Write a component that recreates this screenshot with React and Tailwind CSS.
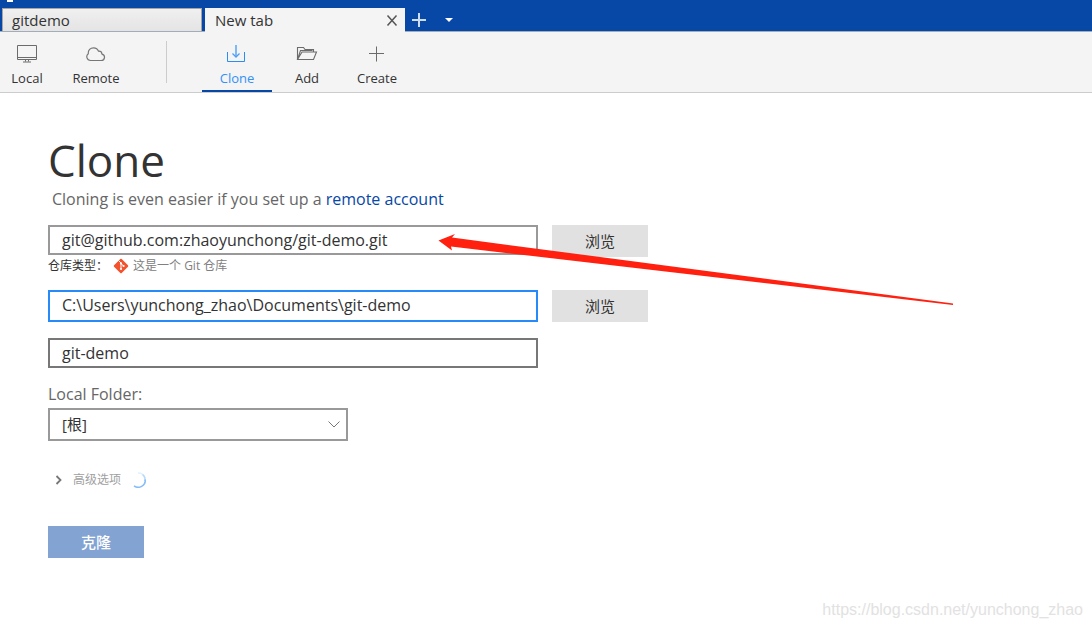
import { useState } from "react";

const CloneIcon = () => (
  <svg width="20" height="20" viewBox="0 0 20 20" fill="none" stroke="currentColor">
    <path d="M.5 8v9.500h17V8" stroke="#2a8cf5" />
    <path d="M9 1v12" stroke="#7db9f8" strokeWidth="2" />
    <path d="M5.500 9.500L9 13l3.500-3.500" stroke="#4a9ef6" strokeWidth="1.300" />
  </svg>
);

const LocalIcon = () => (
  <svg width="20" height="20" viewBox="0 0 20 20" fill="none" stroke="#6b6b6b">
    <path d="M.5 1.500h19v14H.5zM.5 13.500h19M8.500 15.500v2M11.500 15.500v2M6 18h8" />
  </svg>
);

const RemoteIcon = () => (
  <svg width="20" height="20" viewBox="0 0 20 20" fill="none" stroke="#777" strokeWidth="1.200">
    <path d="M4.500 16.500A3.800 3.800 0 0 1 2.300 9.700C1.900 6.100 4.400 3.800 7.500 3.800c2.600 0 4.300 1.300 5 3.400 2.100-.2 3.300 1 3.500 2.900 1.800.5 2.600 1.800 2.500 3.300-.1 1.800-1.500 3.100-3.300 3.100z" />
  </svg>
);

const AddIcon = () => (
  <svg width="22" height="20" viewBox="0 0 22 20" fill="none" stroke="#6b6b6b" strokeWidth="1.100">
    <path d="M1.500 15.500v-12h6l1.500 2h8.500v2.500M1.500 15.500l4.500-7.500h14.500l-3 7.500zM1.500 15.500L4.500 6.500h12" />
  </svg>
);

const CreateIcon = () => (
  <svg width="20" height="20" viewBox="0 0 20 20" fill="none" stroke="#6b6b6b">
    <path d="M9.500 2.500v15M2 9.500h15" />
  </svg>
);

const GitIcon = () => (
  <svg width="16" height="16" viewBox="0 0 16 16" fill="none">
    <rect x="2.600" y="2.600" width="10.800" height="10.800" rx="1" fill="#f4512c" transform="rotate(45 8 8)" />
    <path d="M5.500 2.500L8 5v6M8 5.500l2.500 2.500" stroke="#fff" />
    <circle cx="8" cy="5.400" r="1.100" fill="#fff" />
    <circle cx="8" cy="11" r="1.100" fill="#fff" />
    <circle cx="10.600" cy="8" r="1.100" fill="#fff" />
  </svg>
);

const Spinner = () => (
  <svg width="16" height="16" viewBox="0 0 16 16" fill="none" strokeWidth="1.600">
    <path d="M7 1c3 0 6 2 7 5" stroke="#e3f0fd" />
    <path d="M11.500 2.500A7 7 0 0 1 14 9" stroke="#b9d9fb" />
    <path d="M14.200 7.500A7 7 0 0 1 3 13.800" stroke="#86bdf9" />
  </svg>
);

const locations = [
  { id: "local", label: "Local", icon: LocalIcon, width: "w-[54px]" },
  { id: "remote", label: "Remote", icon: RemoteIcon, width: "w-[84px]" },
];

const actions = [
  { id: "clone", label: "Clone", icon: CloneIcon, width: "w-[70px]" },
  { id: "add", label: "Add", icon: AddIcon, width: "w-[70px]" },
  { id: "create", label: "Create", icon: CreateIcon, width: "w-[70px]" },
];

function ToolButton({ item, active, onSelect }) {
  const Icon = item.icon;
  return (
    <button
      onClick={() => onSelect(item.id)}
      className={`
        flex flex-col items-center gap-1 pt-3 border-b-2 text-[13px] leading-5
        ${item.width}
        ${active ? "border-[#0747a6] text-[#3390f7]" : "border-transparent text-[#333]"}
      `}
    >
      <Icon />
      {item.label}
    </button>
  );
}

function TabBar() {
  return (
    <div className="relative flex items-end h-8 pl-0.5 bg-[#0747a6] border-b border-[#a3acb9] text-[15px] text-[#333]">
      <span className="absolute left-[7px] top-0 w-1.5 h-0.5 bg-white" />
      <button className="w-[200px] h-[23px] pl-[9px] text-left leading-5 border border-b-0 border-[#a5a5a5] bg-linear-to-b from-[#f0f0f0] to-[#e4e4e4]">
        gitdemo
      </button>
      <div className="flex items-center w-[200px] h-6 -mb-px ml-[3px] pl-2.5 pr-[7px] bg-[#f4f4f4]">
        <button className="flex-1 text-left leading-6">New tab</button>
        <button aria-label="Close tab">
          <svg width="12" height="12" viewBox="0 0 12 12" stroke="#555" strokeWidth="1.500">
            <path d="M1.500 1.500l9 10M10.500 1.500l-9 10" />
          </svg>
        </button>
      </div>
      <button aria-label="New tab" className="flex items-center h-[23px] ml-[7px]">
        <svg width="14" height="14" viewBox="0 0 14 14" stroke="#cfdcee" strokeWidth="2">
          <path d="M7 0v14M0 7h14" />
        </svg>
      </button>
      <button aria-label="Tab list" className="flex items-center h-[23px] ml-[19px]">
        <svg width="8" height="4" viewBox="0 0 8 4" fill="#fff">
          <path d="M0 0h8L4 4z" />
        </svg>
      </button>
    </div>
  );
}

export default function App() {
  const [section, setSection] = useState("clone");
  const [source, setSource] = useState("git@github.com:zhaoyunchong/git-demo.git");
  const [path, setPath] = useState("C:\\Users\\yunchong_zhao\\Documents\\git-demo");
  const [name, setName] = useState("git-demo");

  return (
    <div className="relative flex flex-col min-h-screen bg-white overflow-hidden font-['Open_Sans','Noto_Sans_CJK_SC',sans-serif]">
      <TabBar />

      {/* Toolbar */}
      <nav className="flex h-[61px] bg-[#f4f4f4] border-b border-[#ccc]">
        {locations.map((item) => (
          <ToolButton key={item.id} item={item} active={section === item.id} onSelect={setSection} />
        ))}
        <div className="w-px h-[42px] mt-[9px] ml-7 mr-[35px] bg-[#ccc]" />
        {actions.map((item) => (
          <ToolButton key={item.id} item={item} active={section === item.id} onSelect={setSection} />
        ))}
      </nav>

      <main className="flex-1 pl-12 pt-10 text-base text-[#333]">
        <h1 className="text-[44px] leading-[54px]">Clone</h1>
        <p className="pl-1 leading-6 text-[#666]">
          Cloning is even easier if you set up a{" "}
          <a href="#remote" className="text-[#0747a6]">remote account</a>
        </p>

        {/* Source */}
        <div className="flex items-start gap-3.5 mt-3.5">
          <input
            aria-label="Source URL"
            value={source}
            onChange={(e) => setSource(e.target.value)}
            className="w-[490px] h-[30px] px-3 border-2 border-[#999] outline-none"
          />
          <button className="w-24 h-8 text-[15px] bg-[#e1e1e1]">浏览</button>
        </div>
        <div className="flex items-center h-[18px] text-xs">
          <span>仓库类型：</span>
          <span className="flex items-center gap-1 ml-[5px] text-[#808080]">
            <GitIcon />
            这是一个 Git 仓库
          </span>
        </div>

        {/* Destination */}
        <div className="flex items-start gap-3.5 mt-[15px]">
          <input
            aria-label="Destination path"
            value={path}
            onChange={(e) => setPath(e.target.value)}
            className="w-[490px] h-8 px-3 pb-0.5 border-2 border-[#268bf8] outline-none"
          />
          <button className="w-24 h-8 text-[15px] bg-[#e1e1e1]">浏览</button>
        </div>
        <input
          aria-label="Name"
          value={name}
          onChange={(e) => setName(e.target.value)}
          className="block w-[490px] h-[30px] mt-4 px-3 border-2 border-[#777] outline-none"
        />

        <label htmlFor="folder" className="block mt-3.5 mb-0.5 leading-6 text-[#666]">
          Local Folder:
        </label>
        <div className="relative w-[300px]">
          <select id="folder" className="block w-full h-[33px] px-3 text-[15px] border-2 border-[#999] bg-white appearance-none">
            <option>[根]</option>
          </select>
          <svg className="absolute right-2 top-3 pointer-events-none" width="12" height="8" viewBox="0 0 12 8" fill="none" stroke="#777">
            <path d="M.5 1.500L6 7l5.500-5.500" />
          </svg>
        </div>

        <div className="flex items-center h-[22px] mt-7 pl-[7px] text-xs text-[#a0a0a0]">
          <button className="flex items-center gap-2.5">
            <svg width="8" height="10" viewBox="0 0 8 10" fill="none" stroke="#777" strokeWidth="1.800">
              <path d="M1.500 1L5.500 5l-4 4" />
            </svg>
            高级选项
          </button>
          <span className="ml-2.5">
            <Spinner />
          </span>
        </div>

        <button className="block w-24 h-8 mt-[35px] text-[15px] font-medium text-white bg-[#83a3d3]">克隆</button>
      </main>

      {/* Arrow pointing at the source URL */}
      <svg className="absolute left-[438px] top-[232px] pointer-events-none" width="516" height="75" viewBox="438 232 516 75" fill="#ff2010">
        <path d="M438.500 240.500L455 234l-3 3.500L953 303.500v1.500L451 246.500l1 4z" />
      </svg>

      <span className="absolute right-[9px] bottom-2 text-base leading-5 text-[#e2e2e2] font-['Liberation_Sans',sans-serif]">
        https://blog.csdn.net/yunchong_zhao
      </span>
    </div>
  );
}
